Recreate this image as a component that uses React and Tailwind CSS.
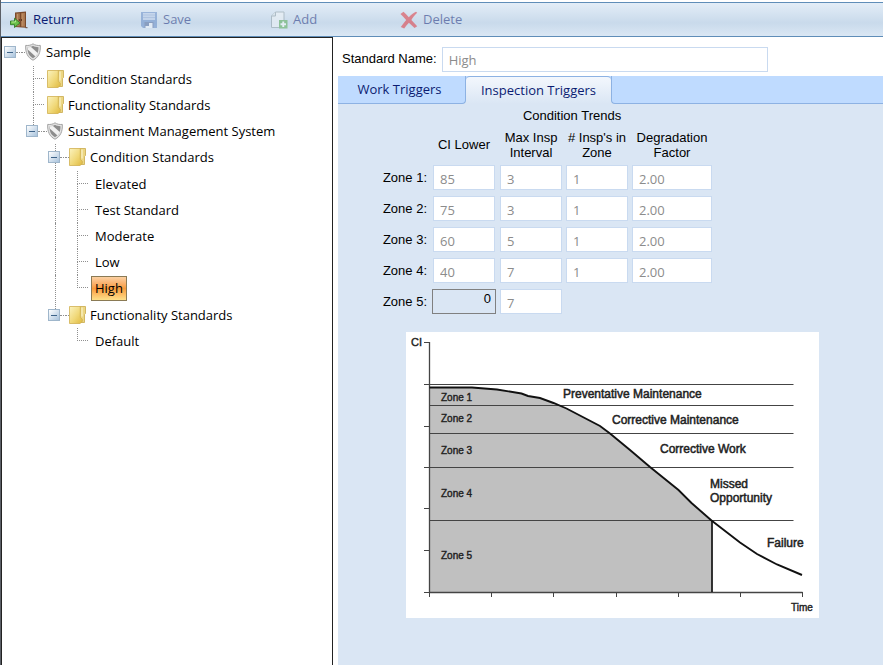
import React from "react";

const UI = "font-['Open_Sans','Noto_Sans',sans-serif]";

/* ---------- icons ---------- */

function ReturnIcon() {
  return (
    <svg width="18" height="18" viewBox="0 0 18 18" aria-hidden="true">
      <path d="M5 1.5 16 .5v16.200l-11-.7z" fill="#7a4a2c" />
      <path d="M6.200 2.500 9.800 2.200v13.300l-3.600-.2zM11 2.200l4-.4v13.900l-4-.2z" fill="#a9774f" />
      <path d="M7.500 3v12M12.800 2.500v12.800" stroke="#c59a70" strokeWidth=".8" />
      <path d="M9.300 8v2M11.500 8v2" stroke="#4b2a15" strokeWidth=".8" />
      <path d="M15.500 16.700h2" stroke="#5d4030" />
      <path d="M.5 10h4V7.200L10 11.900 4.500 16.500v-2.800h-4z" fill="#6cc04a" stroke="#2f7d28" strokeWidth=".9" />
      <path d="M1.500 11h4V9.500" stroke="#b5eb94" fill="none" />
    </svg>
  );
}

function SaveIcon() {
  return (
    <svg width="18" height="18" viewBox="0 0 18 18" aria-hidden="true">
      <path d="M1 1h16v16H3l-2-2z" fill="#5e86c4" />
      <path d="M3 2h12v7H3z" fill="#b9cbe8" />
      <path d="M3 4h12M3 6.500h12" stroke="#8fa9d3" />
      <path d="M4.500 11h9v6h-9z" fill="#4a6396" />
      <path d="M9 12h3.500v5H5.500v-2H9z" fill="#f4f7fc" />
    </svg>
  );
}

function AddIcon() {
  return (
    <svg width="18" height="18" viewBox="0 0 18 18" aria-hidden="true">
      <path d="M5.500 1h8.500v15.500H1.500V5z" fill="#f3f6f7" stroke="#8b9aa0" />
      <path d="M5.500 1v4h-4" fill="#dfe6e8" stroke="#8b9aa0" />
      <rect x="9" y="9" width="8.500" height="8.500" fill="#4fa847" />
      <path d="M13.250 10.500v5.500M10.500 13.250H16" stroke="#fff" strokeWidth="1.900" />
    </svg>
  );
}

function DeleteIcon() {
  return (
    <svg width="18" height="18" viewBox="0 0 18 18" aria-hidden="true">
      <path
        d="M.5 3 3.500.8C5.500 2.500 7.300 4.500 8.800 6.300 11 3.700 13.500 1.800 16 .8l1.200 1C14.700 4 12.900 6.500 11.400 9c2 2 4 4.300 5.800 6.200L14.500 17c-1.900-1.800-3.900-3.700-5.600-5.200C7.200 13.500 5.500 15.500 4.200 17.500L.8 16C2.500 13.500 4.200 11 6.200 8.900 4.200 6.800 2.200 4.800.5 3z"
        fill="#e0282e"
      />
    </svg>
  );
}

function ShieldIcon() {
  return (
    <svg width="16" height="18" viewBox="0 0 16 18" className="shrink-0" aria-hidden="true">
      <path
        d="M8 .8C6.200 2.200 3.500 2.700.7 2.400.3 9.500 2.500 14.500 8 17.200 13.500 14.500 15.700 9.500 15.300 2.400 12.500 2.700 9.800 2.200 8 .8z"
        fill="#e4e4e4"
        stroke="#a3a3a3"
      />
      <path d="M8 2.800C6.500 3.800 4.500 4.200 2.500 4.200 2.500 9.500 4 13 8 15.200 12 13 13.500 9.500 13.500 4.200 11.500 4.200 9.500 3.800 8 2.800z" fill="#8d8d8d" />
      <path d="M2.500 4.200 6 4 13 10.200 10.500 13.500 3 6.800z" fill="#f2f2f2" />
    </svg>
  );
}

function FolderIcon() {
  return (
    <svg width="17" height="18" viewBox="0 0 17 18" className="-mr-px shrink-0" aria-hidden="true">
      <defs>
        <linearGradient id="folder" x1="0" y1="0" x2="1" y2="1">
          <stop offset="0" stopColor="#fbf3bf" />
          <stop offset=".55" stopColor="#f0d878" />
          <stop offset="1" stopColor="#dfb93f" />
        </linearGradient>
      </defs>
      <path d="M11 .5h5.500v7l-1 1v8H10z" fill="#ecd682" stroke="#c9a94c" strokeWidth=".8" />
      <path d="M.5.5h10.800v11l2 1.800v2.200l-2.300 2H.5z" fill="url(#folder)" stroke="#d0b050" strokeWidth=".8" />
      <path d="M13 1.500v9" stroke="#fbf4cc" strokeWidth="1.200" />
    </svg>
  );
}

/* ---------- toolbar ---------- */

function ToolButton({ icon, label, disabled }) {
  return (
    <button type="button" disabled={disabled} className="flex items-center gap-[5px] pt-px text-[#0b1c72] disabled:opacity-50">
      {icon}
      {label}
    </button>
  );
}

function Toolbar() {
  return (
    <div
      role="toolbar"
      className="mt-[2px] grid h-[35px] grid-cols-[repeat(4,130px)] border-y border-[#5f8db8] bg-linear-to-b from-[#e3edf7] via-[#c9daeb] via-60% to-[#dae7f4] pl-[9px]"
    >
      <ToolButton icon={<ReturnIcon />} label="Return" />
      <ToolButton icon={<SaveIcon />} label="Save" disabled />
      <ToolButton icon={<AddIcon />} label="Add" disabled />
      <ToolButton icon={<DeleteIcon />} label="Delete" disabled />
    </div>
  );
}

/* ---------- tree ---------- */

const DOT = "border-dotted border-[#8f8f8f]";

function Gutter({ kind }) {
  if (kind === "blank") return <span className="w-[22px] shrink-0" />;
  if (kind === "line")
    return (
      <span className="flex w-[22px] shrink-0 self-stretch pl-[11px]">
        <span className={`h-full border-l ${DOT}`} />
      </span>
    );
  return (
    <span className="flex w-[22px] shrink-0 flex-col self-stretch pl-[11px]">
      <span className={`h-[13px] border-b border-l ${DOT}`} />
      {kind === "tee" && <span className={`h-[13px] border-l ${DOT}`} />}
    </span>
  );
}

function Toggle({ name, up, down, first }) {
  return (
    <span className={`flex shrink-0 flex-col self-stretch ${first ? "w-[20px]" : "w-[22px]"}`}>
      <span className="flex h-[7px] pl-[11px]">{up && <span className={`border-l ${DOT}`} />}</span>
      <span className={`flex items-center ${first ? "pl-[2px]" : "pl-[4px]"}`}>
        <button
          type="button"
          aria-label={`Collapse ${name}`}
          aria-expanded="true"
          className="flex size-3 items-center justify-center border border-[#9fb6cb] bg-linear-to-br from-white to-[#a9c3dc]"
        >
          <span className="h-px w-[6px] bg-[#3d6389]" />
        </button>
        <span className={`flex-1 border-t ${DOT}`} />
      </span>
      <span className="flex h-[7px] pl-[11px]">{down && <span className={`border-l ${DOT}`} />}</span>
    </span>
  );
}

function Row({ label, icon, gutters = [], toggle, root, selected }) {
  return (
    <div className="flex h-[26px] items-center">
      {!root && <span className="w-5 shrink-0" />}
      {gutters.map((kind, i) => (
        <Gutter key={i} kind={kind} />
      ))}
      {toggle && <Toggle name={label} first={root} {...toggle} />}
      <span className={toggle ? `w-[3px] border-t ${DOT}` : "w-[3px]"} />
      {icon === "shield" && <ShieldIcon />}
      {icon === "folder" && <FolderIcon />}
      <a
        href="#"
        className={
          selected
            ? "border border-[#8a7a55] bg-linear-to-b from-[#fbd0a2] via-[#f99a3a] via-50% to-[#fde08a] px-[3px] leading-[23px]"
            : `border border-transparent px-[3px] leading-[23px] ${icon ? "ml-px" : ""}`
        }
      >
        {label}
      </a>
    </div>
  );
}

function Tree() {
  return (
    <nav aria-label="Standards" className="w-[332px] shrink-0 border border-b-0 border-[#222] bg-white pt-px text-black">
      <ul>
        <li>
          <Row label="Sample" icon="shield" root toggle={{}} />
          <ul className="pt-px">
            <li><Row label="Condition Standards" icon="folder" gutters={["tee"]} /></li>
            <li><Row label="Functionality Standards" icon="folder" gutters={["tee"]} /></li>
            <li>
              <Row label="Sustainment Management System" icon="shield" toggle={{ up: true }} />
              <ul>
                <li>
                  <Row label="Condition Standards" icon="folder" gutters={["blank"]} toggle={{ up: true, down: true }} />
                  <ul className="py-px">
                    <li><Row label="Elevated" gutters={["blank", "line", "tee"]} /></li>
                    <li><Row label="Test Standard" gutters={["blank", "line", "tee"]} /></li>
                    <li><Row label="Moderate" gutters={["blank", "line", "tee"]} /></li>
                    <li><Row label="Low" gutters={["blank", "line", "tee"]} /></li>
                    <li><Row label="High" gutters={["blank", "line", "corner"]} selected /></li>
                  </ul>
                </li>
                <li>
                  <Row label="Functionality Standards" icon="folder" gutters={["blank"]} toggle={{ up: true }} />
                  <ul>
                    <li><Row label="Default" gutters={["blank", "blank", "corner"]} /></li>
                  </ul>
                </li>
              </ul>
            </li>
          </ul>
        </li>
      </ul>
    </nav>
  );
}

/* ---------- tabs ---------- */

function Tabs() {
  return (
    <div
      role="tablist"
      className={`flex h-7 bg-[linear-gradient(#bfdbff_50%,#dae6f4_50%)] text-[#0b1c72] ${UI}`}
    >
      <button type="button" role="tab" aria-selected="false" className="w-32 rounded-br-[4px] border-r border-b border-[#8db2e3] bg-[#bfdbff] pt-px pr-1">
        Work Triggers
      </button>
      <button type="button" role="tab" aria-selected="true" className="w-[145px] rounded-t-[4px] border-t border-[#8db2e3] bg-linear-to-b from-[#f3f7fd] to-[#dae6f4]">
        Inspection Triggers
      </button>
      <span className="flex-1 rounded-bl-[4px] border-b border-l border-[#8db2e3] bg-[#bfdbff]" />
    </div>
  );
}

/* ---------- zone table ---------- */

const ZONES = [
  ["Zone 1", "85", "3", "1", "2.00"],
  ["Zone 2", "75", "3", "1", "2.00"],
  ["Zone 3", "60", "5", "1", "2.00"],
  ["Zone 4", "40", "7", "1", "2.00"],
  ["Zone 5", "0", "7"],
];

const COLUMNS = ["CI Lower", "Max Insp Interval", "# Insp's in Zone", "Degradation Factor"];

const FIELD = "block h-[25px] border border-[#c9daf0] bg-white pt-[2px] pl-[6px] text-[#8c8c8c]";

function ZoneTable() {
  return (
    <table className="w-[376px] table-fixed border-collapse text-black">
      <colgroup>
        <col className="w-[92px]" />
        <col className="w-[68px]" />
        <col className="w-[66px]" />
        <col className="w-[66px]" />
        <col className="w-[84px]" />
      </colgroup>
      <thead>
        <tr className="h-[23px]">
          <td />
          <th colSpan={4} className="font-normal">Condition Trends</th>
        </tr>
        <tr className="h-[35px]">
          <td />
          {COLUMNS.map((name) => (
            <th key={name} scope="col" className="font-normal">
              <span className="-mx-1 block leading-[15px]">{name}</span>
            </th>
          ))}
        </tr>
      </thead>
      <tbody>
        {ZONES.map(([zone, ...values]) => (
          <tr key={zone} className="h-[31px]">
            <th scope="row" className="pr-[3px] text-right font-normal">{zone}:</th>
            {values.map((value, i) => (
              <td key={i} className="px-[2px]">
                {zone === "Zone 5" && i === 0 ? (
                  <input
                    aria-label={`${zone} ${COLUMNS[i]}`}
                    defaultValue={value}
                    readOnly
                    className="block h-[25px] w-full border border-[#808080] bg-transparent pr-[4px] pb-[7px] text-right"
                  />
                ) : (
                  <input
                    aria-label={`${zone} ${COLUMNS[i]}`}
                    defaultValue={value}
                    className={`${FIELD} ${UI} ${i === 0 ? "mx-auto w-[62px]" : "w-full"}`}
                  />
                )}
              </td>
            ))}
          </tr>
        ))}
      </tbody>
    </table>
  );
}

/* ---------- chart ---------- */

const CURVE =
  "23.500,55.500 66,55.500 91,57.500 115.500,61.500 122,64 134,66 147.500,71 160.500,76.500 194,94 204,101.500 224,118 244,135 272.500,158 285.500,171 305.500,188.500";
const TAIL = "305.500,188.500 334,210.500 351,222 371,232.500 396,243";

function Chart() {
  return (
    <svg
      width="413"
      height="286"
      viewBox="0 0 413 286"
      role="img"
      aria-label="Condition index over time by zone"
      className="bg-white font-['Liberation_Sans',Arial,sans-serif]"
    >
      <polygon points={`${CURVE} 305.500,260 23.500,260`} fill="#c0c0c0" />
      <g stroke="#444" strokeWidth="1">
        {[52.5, 73.5, 101.5, 135.5, 188.5].map((y) => (
          <line key={y} x1="23.500" x2="387.500" y1={y} y2={y} />
        ))}
        {[10.5, 52.5, 94.5, 135.5, 176.5, 218.5, 260.5].map((y) => (
          <line key={y} x1="18" x2="23.500" y1={y} y2={y} />
        ))}
        {[23.5, 85.5, 147.5, 210.5, 272.5, 334.5, 396.5].map((x) => (
          <line key={x} x1={x} x2={x} y1="260" y2="265" />
        ))}
        <path d="M23.500 10v250.500H396.500" fill="none" strokeWidth="1.300" />
      </g>
      <polyline points={CURVE} fill="none" stroke="#111" strokeWidth="1.900" />
      <polyline points={TAIL} fill="none" stroke="#111" strokeWidth="1.900" />
      <path d="M306 188.500V260" stroke="#111" strokeWidth="1.700" />
      <g fill="#222" stroke="#222" strokeWidth=".4" fontSize="10">
        <text x="5" y="14" fontSize="11">CI</text>
        <text x="35" y="69">Zone 1</text>
        <text x="35" y="90">Zone 2</text>
        <text x="35" y="122">Zone 3</text>
        <text x="35" y="165">Zone 4</text>
        <text x="35" y="227">Zone 5</text>
        <text x="385" y="279">Time</text>
      </g>
      <g fill="#222" stroke="#222" strokeWidth=".5" fontSize="12">
        <text x="157" y="66">Preventative Maintenance</text>
        <text x="206" y="92">Corrective Maintenance</text>
        <text x="254" y="121">Corrective Work</text>
        <text x="304" y="156">Missed</text>
        <text x="304" y="170">Opportunity</text>
        <text x="361" y="215">Failure</text>
      </g>
    </svg>
  );
}

/* ---------- page ---------- */

export default function App() {
  return (
    <div className={`flex min-h-screen flex-col border-l border-[#5b5f66] bg-white text-[13px] ${UI}`}>
      <Toolbar />
      <div className="flex flex-1">
        <Tree />
        <main className="ml-[5px] flex min-w-0 flex-1 flex-col font-['Liberation_Sans',Arial,sans-serif]">
          <div className="flex h-[39px] items-center gap-[5px] pt-[5px] pl-1">
            <label htmlFor="standard-name">Standard Name:</label>
            <input id="standard-name" defaultValue="High" className={`${FIELD} ${UI} w-[326px]`} />
          </div>
          <Tabs />
          <section className="flex-1 bg-[#dae6f4]">
            <ZoneTable />
            <div className="pt-[15px] pl-[68px]">
              <Chart />
            </div>
          </section>
        </main>
      </div>
    </div>
  );
}
